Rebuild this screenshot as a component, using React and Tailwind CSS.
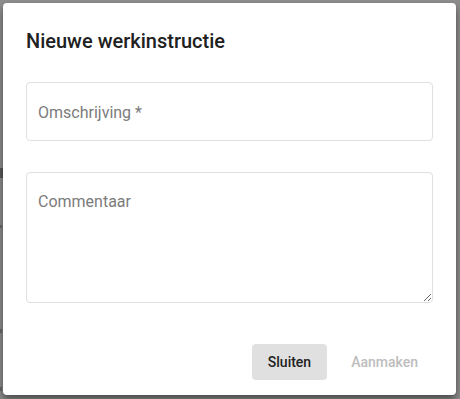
import { useState } from 'react';

function App() {
  const [title, setTitle] = useState('');
  const [comment, setComment] = useState('');

  return (
    <div className="relative w-[460px] h-[399px] overflow-hidden bg-[#8e8e8e] pl-[3px] pt-[3px] font-['Roboto',sans-serif]">
      {/* bits of the page behind the backdrop */}
      <div className="absolute left-0 top-[168px] w-[3px] h-[10px] bg-[#5a5a5a]" />
      <div className="absolute left-0 top-[225px] w-[2px] h-[3px] bg-[#6a6a6a]" />
      <div className="absolute left-0 top-[329px] w-[2px] h-[4px] bg-[#6a6a6a]" />
      <div className="absolute left-0 top-[387px] w-[2px] h-[4px] bg-[#6a6a6a]" />

      <div className="relative flex flex-col w-[453px] h-[392px] bg-white rounded-[4px] shadow-[0_6px_10px_rgba(0,0,0,0.35),0_2px_4px_rgba(0,0,0,0.2)] px-[23px] pt-[22px]">
        <h2 className="text-[20px] leading-[32px] font-medium text-[#212121]">
          Nieuwe werkinstructie
        </h2>

        <input
          value={title}
          onChange={e => setTitle(e.target.value)}
          placeholder="Omschrijving *"
          className="mt-[25px] h-[59px] w-full rounded-[4px] border border-[#e0e0e0] px-[11px] pt-[1px] text-[16px] text-[#212121] placeholder:text-[#7b7b7b] outline-none"
        />

        <textarea
          value={comment}
          onChange={e => setComment(e.target.value)}
          placeholder="Commentaar"
          className="mt-[31px] h-[131px] w-full rounded-[4px] border border-[#e0e0e0] px-[11px] pt-[17px] text-[16px] leading-[24px] text-[#212121] placeholder:text-[#7b7b7b] outline-none"
        />

        <div className="mt-[41px] -mr-[1px] flex justify-end gap-[8px]">
          <button className="h-[36px] px-4 rounded-[4px] bg-[#e0e0e0] text-[14px] font-medium text-[#212121]">
            Sluiten
          </button>
          <button disabled className="h-[36px] px-4 rounded-[4px] text-[14px] font-medium text-[#bdbdbd]">
            Aanmaken
          </button>
        </div>
      </div>
    </div>
  );
}

export default App;
